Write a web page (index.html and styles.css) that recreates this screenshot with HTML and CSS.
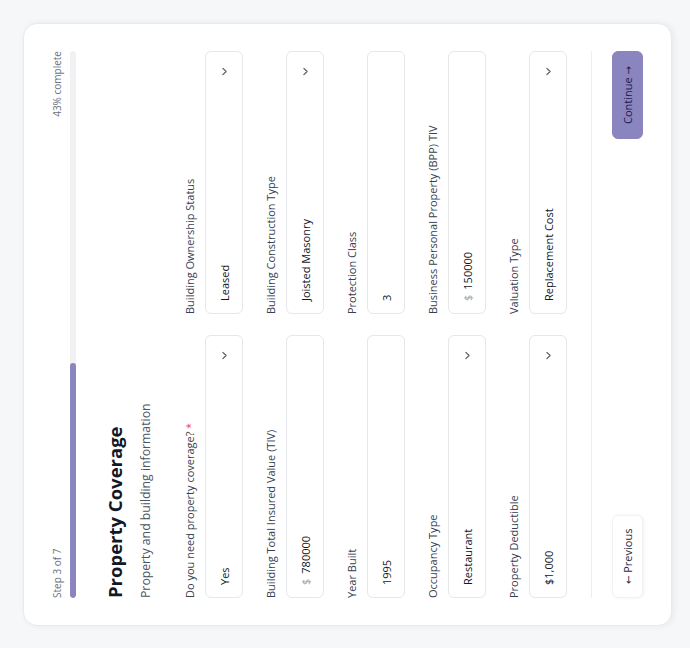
FILE: index.html
```html
<!DOCTYPE html>
<html lang="en">
<head>
<meta charset="utf-8">
<title>Property Coverage</title>
<link rel="stylesheet" href="styles.css">
</head>
<body>
<div class="stage">
  <div class="card">
    <div class="progress-head">
      <span>Step 3 of 7</span>
      <span>43% complete</span>
    </div>
    <div class="track"><div class="fill" style="width:43%"></div></div>

    <h1 class="title">Property Coverage</h1>
    <p class="subtitle">Property and building information</p>

    <div class="grid">
      <div class="field">
        <label class="label">Do you need property coverage? <span class="req">*</span></label>
        <div class="control select"><span class="val">Yes</span><svg class="chev" viewBox="0 0 10 10"><path d="M1.5 3.2 L5 6.8 L8.5 3.2"/></svg></div>
      </div>
      <div class="field">
        <label class="label">Building Ownership Status</label>
        <div class="control select"><span class="val">Leased</span><svg class="chev" viewBox="0 0 10 10"><path d="M1.5 3.2 L5 6.8 L8.5 3.2"/></svg></div>
      </div>

      <div class="field">
        <label class="label">Building Total Insured Value (TIV)</label>
        <div class="control"><span class="cur">$</span><span class="val">780000</span></div>
      </div>
      <div class="field">
        <label class="label">Building Construction Type</label>
        <div class="control select"><span class="val">Joisted Masonry</span><svg class="chev" viewBox="0 0 10 10"><path d="M1.5 3.2 L5 6.8 L8.5 3.2"/></svg></div>
      </div>

      <div class="field">
        <label class="label">Year Built</label>
        <div class="control"><span class="val">1995</span></div>
      </div>
      <div class="field">
        <label class="label">Protection Class</label>
        <div class="control"><span class="val">3</span></div>
      </div>

      <div class="field">
        <label class="label">Occupancy Type</label>
        <div class="control select"><span class="val">Restaurant</span><svg class="chev" viewBox="0 0 10 10"><path d="M1.5 3.2 L5 6.8 L8.5 3.2"/></svg></div>
      </div>
      <div class="field">
        <label class="label">Business Personal Property (BPP) TIV</label>
        <div class="control"><span class="cur">$</span><span class="val">150000</span></div>
      </div>

      <div class="field">
        <label class="label">Property Deductible</label>
        <div class="control select"><span class="val">$1,000</span><svg class="chev" viewBox="0 0 10 10"><path d="M1.5 3.2 L5 6.8 L8.5 3.2"/></svg></div>
      </div>
      <div class="field">
        <label class="label">Valuation Type</label>
        <div class="control select"><span class="val">Replacement Cost</span><svg class="chev" viewBox="0 0 10 10"><path d="M1.5 3.2 L5 6.8 L8.5 3.2"/></svg></div>
      </div>
    </div>

    <div class="footer">
      <button class="btn btn-prev"><span class="arr">←</span> Previous</button>
      <button class="btn btn-next">Continue <span class="arr">→</span></button>
    </div>
  </div>
</div>
</body>
</html>
```

FILE: styles.css
```css
html, body {
  margin: 0;
  padding: 0;
}
body {
  background: #f6f7f9;
  font-family: "Open Sans", "Noto Sans", sans-serif;
  color: #1f2937;
}
.stage {
  width: 690px;
  height: 648px;
  display: flex;
  align-items: center;
  justify-content: center;
}
.card {
  flex: none;
  width: 603px;
  box-sizing: border-box;
  padding: 26px 27px 28px;
  background: #ffffff;
  border: 1px solid #e9eaee;
  border-radius: 14px;
  box-shadow: 0 2px 6px rgba(17, 24, 39, 0.06);
  transform: translateX(2px) rotate(-90deg);
}
.progress-head {
  display: flex;
  justify-content: space-between;
  font-size: 10px;
  line-height: 14px;
  color: #6b7280;
}
.track {
  margin-top: 6px;
  height: 6px;
  border-radius: 3px;
  background: #f1f1f4;
  overflow: hidden;
}
.fill {
  height: 100%;
  background: #8a84bf;
  border-radius: 3px;
}
.title {
  margin: 27px 0 0;
  font-size: 18.5px;
  line-height: 24px;
  font-weight: 700;
  color: #111827;
}
.subtitle {
  margin: 10px 0 0;
  font-size: 12.25px;
  line-height: 18px;
  color: #4b5563;
}
.grid {
  margin-top: 27px;
  display: grid;
  grid-template-columns: 1fr 1fr;
  column-gap: 21px;
  row-gap: 20px;
}
.field {
  display: flex;
  flex-direction: column;
}
.label {
  font-size: 11px;
  line-height: 16px;
  color: #374151;
  margin-bottom: 7px;
}
.req {
  color: #ef4444;
  font-size: 10px;
}
.control {
  height: 38px;
  box-sizing: border-box;
  border: 1px solid #e5e7eb;
  border-radius: 6px;
  background: #fff;
  display: flex;
  align-items: center;
  padding: 0 12px;
  font-size: 11px;
  color: #111827;
}
.cur {
  color: #9ca3af;
  margin-right: 5px;
}
.val {
  flex: 1;
}
.chev {
  width: 9px;
  height: 9px;
  margin-right: 3px;
  fill: none;
  stroke: #555b66;
  stroke-width: 1.3;
  stroke-linecap: round;
  stroke-linejoin: round;
}
.footer {
  margin-top: 24px;
  padding-top: 20px;
  border-top: 1px solid #eceef1;
  display: flex;
  justify-content: space-between;
}
.btn {
  font-family: inherit;
  font-size: 11px;
  line-height: 15px;
  height: 31px;
  border-radius: 6px;
  padding: 0 13px;
  cursor: pointer;
}
.arr {
  font-family: "DejaVu Sans", sans-serif;
  font-size: 10px;
}
.btn-prev {
  background: #fff;
  border: 1px solid #f1f2f4;
  color: #1f2937;
  box-shadow: 0 1px 3px rgba(0, 0, 0, 0.06);
}
.btn-next {
  background: #8a84bf;
  border: 1px solid #8a84bf;
  color: #1e1b4b;
  padding: 0 14px;
}
```
